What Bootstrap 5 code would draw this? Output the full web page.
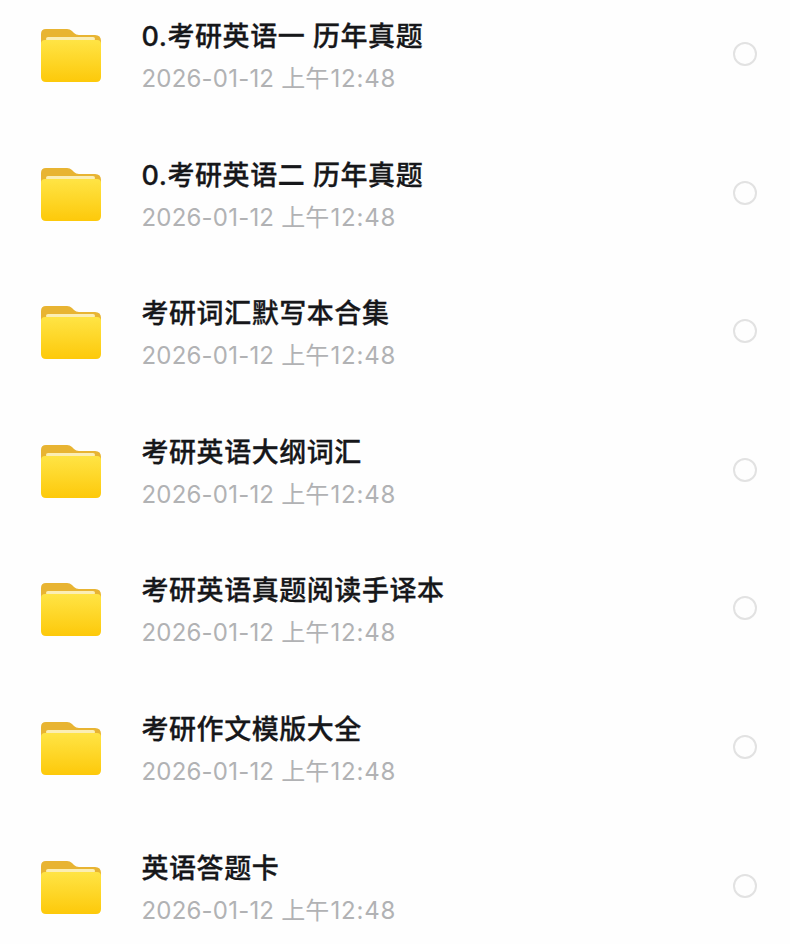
<!DOCTYPE html>
<html lang="zh-CN">
<head>
    <meta charset="UTF-8">
    <title>Files</title>
    <link href="https://cdn.jsdelivr.net/npm/bootstrap@5.3.0/dist/css/bootstrap.min.css" rel="stylesheet">
    <style>
        html, body {
            height: 944px;
            overflow: hidden;
        }

        body {
            background-color: #fefefe;
            font-family: Inter, "Noto Sans CJK SC", sans-serif;
        }

        .file-list {
            padding-top: 19px;
        }

        .file-row {
            height: 138.6px;
            padding-left: 40px;
            padding-right: 33px;
        }

        .folder-icon {
            width: 62px;
            height: 58px;
            margin-top: 7px;
            margin-right: 39.5px;
            flex-shrink: 0;
            filter: blur(0.5px);
        }

        .file-name {
            font-size: 27px;
            line-height: 36px;
            font-weight: 500;
            color: #16171a;
            letter-spacing: 0.55px;
            -webkit-text-stroke: 0.3px #16171a;
        }

        .file-date {
            font-size: 24px;
            line-height: 32px;
            margin-top: 8px;
            color: #b1b2b4;
            letter-spacing: 0.2px;
        }

        .file-time {
            margin-left: 1px;
            letter-spacing: 0.8px;
        }

        .select-ring {
            width: 24px;
            height: 24px;
            margin-top: 23px;
            border: 2px solid #e2e2e2;
            border-radius: 50%;
            flex-shrink: 0;
        }
    </style>
</head>
<body>
<svg width="0" height="0" class="position-absolute">
    <defs>
        <linearGradient id="folderFront" x1="0" y1="0" x2="0" y2="1">
            <stop offset="0" stop-color="#ffe445"/>
            <stop offset="1" stop-color="#fdc90a"/>
        </linearGradient>
        <symbol id="folder" viewBox="0 0 62 58">
            <path d="M1 8q0-5 5-5h21q3 0 5 2l2 2q2 2 5 2h16q6 0 6 6v10H1z" fill="#e8b432"/>
            <rect x="6" y="11" width="49" height="4" rx="2" fill="#fbeeb4"/>
            <path d="M1 18q0-4 4-4h52q4 0 4 4v33q0 5-5 5H6q-5 0-5-5z" fill="url(#folderFront)"/>
        </symbol>
    </defs>
</svg>

<div class="file-list" id="fileList"></div>

<script>
    const names = [
        "0.考研英语一 历年真题",
        "0.考研英语二 历年真题",
        "考研词汇默写本合集",
        "考研英语大纲词汇",
        "考研英语真题阅读手译本",
        "考研作文模版大全",
        "英语答题卡"
    ];

    document.getElementById("fileList").innerHTML = names.map(name => `
        <div class="file-row d-flex align-items-start">
            <svg class="folder-icon"><use href="#folder"/></svg>
            <div class="flex-grow-1">
                <div class="file-name">${name}</div>
                <div class="file-date">2026-01-12 上午<span class="file-time">12:48</span></div>
            </div>
            <div class="select-ring"></div>
        </div>
    `).join("");
</script>
<script src="https://cdn.jsdelivr.net/npm/bootstrap@5.3.0/dist/js/bootstrap.bundle.min.js"></script>
</body>
</html>
